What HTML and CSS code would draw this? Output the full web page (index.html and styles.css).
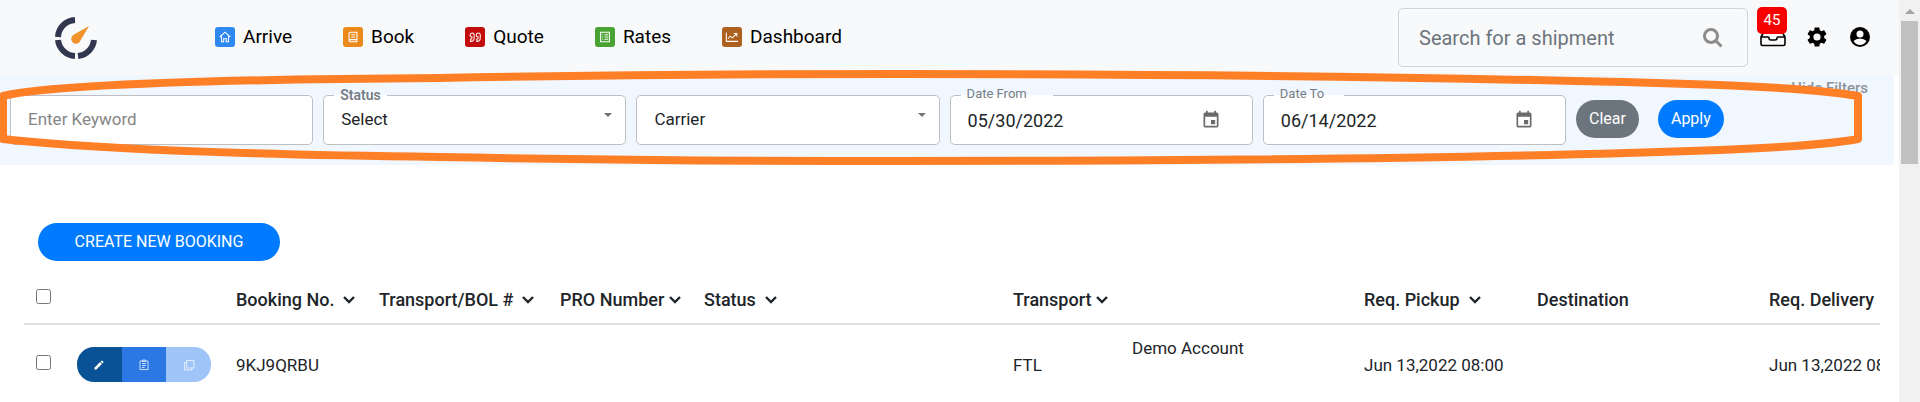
FILE: index.html
```html
<!DOCTYPE html>
<html lang="en">
<head>
  <meta charset="UTF-8">
  <title>Bookings</title>
  <link rel="stylesheet" href="styles.css">
</head>
<body>

  <div class="page">
    <header class="topbar">
      <a href="#" class="logo" aria-label="Home">
        <svg width="44" height="44" viewBox="0 0 44 44" fill="none">
          <g stroke="#31374f" stroke-width="6">
            <path d="M21 4A18 18 0 0 0 4 21"/>
            <path d="M4 24A18 18 0 0 0 21 40"/>
            <path d="M24 40A18 18 0 0 0 40 24"/>
          </g>
          <path d="M35 10L26.500 24.500A4.800 4.800 0 1 1 20 18.500Z" fill="#f0932b"/>
        </svg>
      </a>

      <nav class="menu">
        <a href="#">
          <span class="menu-icon blue">
            <svg viewBox="0 0 16 16"><path d="M2 8L8 2.500L14 8M4 7V13.500H6.500V10H9.500V13.500H12V7"/></svg>
          </span>
          Arrive
        </a>
        <a href="#">
          <span class="menu-icon orange">
            <svg viewBox="0 0 16 16"><path d="M13 2.500H5Q3.500 2.500 3.500 4V12Q3.500 13.500 5 13.500H13M12.500 2.500V11H5Q3.500 11 3.500 12.500M6 5.500H10.500M6 8H10.500M12.500 11V13.500"/></svg>
          </span>
          Book
        </a>
        <a href="#">
          <span class="menu-icon red">
            <svg viewBox="0 0 16 16"><path d="M7 5.500A2.300 2.300 0 1 0 4.500 8V9.500Q4.500 10.500 3 10.500V13Q7 13 7 9ZM14 5.500A2.300 2.300 0 1 0 11.500 8V9.500Q11.500 10.500 10 10.500V13Q14 13 14 9Z"/></svg>
          </span>
          Quote
        </a>
        <a href="#">
          <span class="menu-icon green">
            <svg viewBox="0 0 16 16"><path d="M3 2.500H13V13.500H3ZM5 5.500H6M7.500 5.500H11.500M5 8H6M7.500 8H11.500M5 10.500H6M7.500 10.500H11.500"/></svg>
          </span>
          Rates
        </a>
        <a href="#">
          <span class="menu-icon brown">
            <svg viewBox="0 0 16 16"><path d="M1.500 3V13H15M3.500 10L6 7L8.500 9L13 4.500M10 4H13.500V7.500"/></svg>
          </span>
          Dashboard
        </a>
      </nav>

      <form class="search">
        <input type="text" placeholder="Search for a shipment" aria-label="Search for a shipment">
        <button type="button" aria-label="Search">
          <svg width="20" height="20" viewBox="0 0 20 20" fill="none" stroke="#8c8c8c" stroke-width="3">
            <circle cx="8" cy="8" r="6.500"/>
            <path d="M12.500 12.500L18.500 18.500"/>
          </svg>
        </button>
      </form>

      <div class="tools">
        <button type="button" class="inbox" aria-label="Messages">
          <svg width="26" height="20" viewBox="0 0 26 20" fill="none" stroke="#000" stroke-width="1.600" stroke-linejoin="round">
            <path d="M1 10L5 3H21L25 10V17Q25 18.500 23.500 18.500H2.500Q1 18.500 1 17ZM1 10H8Q9 10 9 11Q9 13 11 13H15Q17 13 17 11Q17 10 18 10H25"/>
          </svg>
          <span class="badge">45</span>
        </button>
        <button type="button" aria-label="Settings">
          <svg width="24" height="24" viewBox="0 0 24 24">
            <path d="M19.140 12.940c.04-.3.060-.61.060-.94s-.02-.64-.07-.94l2.030-1.580c.18-.14.23-.41.120-.61l-1.920-3.320c-.12-.22-.37-.29-.59-.22l-2.390.96c-.5-.38-1.030-.7-1.620-.94l-.36-2.540c-.04-.24-.24-.41-.48-.41h-3.840c-.24 0-.43.17-.47.41l-.36 2.540c-.59.24-1.130.57-1.620.94l-2.390-.96c-.22-.08-.47 0-.59.22L2.740 8.870c-.12.21-.08.470.12.610l2.030 1.580c-.05.3-.09.630-.09.940s.02.640.070.940l-2.030 1.580c-.18.140-.23.410-.12.610l1.920 3.320c.12.220.37.290.59.220l2.390-.96c.5.380 1.030.7 1.620.94l.36 2.540c.05.240.24.410.48.410h3.840c.24 0 .44-.17.470-.41l.36-2.540c.59-.24 1.130-.56 1.620-.94l2.390.96c.22.080.47 0 .59-.22l1.920-3.320c.12-.22.070-.47-.12-.61zM12 15.600A3.600 3.600 0 1 1 12 8.400A3.600 3.600 0 0 1 12 15.600z"/>
          </svg>
        </button>
        <button type="button" aria-label="Account">
          <svg width="24" height="24" viewBox="0 0 24 24">
            <circle cx="12" cy="12" r="10"/>
            <circle cx="12" cy="9" r="3.500" fill="#f8f9fa"/>
            <path d="M5.500 16Q8 13.500 12 13.500T18.500 16Q16 20 12 20T5.500 16Z" fill="#f8f9fa"/>
          </svg>
        </button>
      </div>
    </header>

    <section class="filters">
      <a href="#" class="hide-filters">Hide Filters</a>

      <div class="field">
        <input type="text" placeholder="Enter Keyword" aria-label="Keyword">
      </div>
      <div class="field">
        <label for="status" class="bold">Status</label>
        <select id="status">
          <option>Select</option>
        </select>
        <span class="caret"></span>
      </div>
      <div class="field">
        <select id="carrier" aria-label="Carrier">
          <option>Carrier</option>
        </select>
        <span class="caret"></span>
      </div>
      <div class="field date">
        <label for="dateFrom" class="date-from">Date From</label>
        <input type="text" id="dateFrom" value="05/30/2022">
        <button type="button" aria-label="Pick start date">
          <svg width="20" height="20" viewBox="0 0 24 24"><path d="M17 12h-5v5h5v-5zM16 1v2H8V1H6v2H5c-1.110 0-2 .9-2 2v14c0 1.100.89 2 2 2h14c1.100 0 2-.9 2-2V5c0-1.100-.9-2-2-2h-1V1h-2zm3 18H5V8h14v11z"/></svg>
        </button>
      </div>
      <div class="field date">
        <label for="dateTo" class="date-to">Date To</label>
        <input type="text" id="dateTo" value="06/14/2022">
        <button type="button" aria-label="Pick end date">
          <svg width="20" height="20" viewBox="0 0 24 24"><path d="M17 12h-5v5h5v-5zM16 1v2H8V1H6v2H5c-1.110 0-2 .9-2 2v14c0 1.100.89 2 2 2h14c1.100 0 2-.9 2-2V5c0-1.100-.9-2-2-2h-1V1h-2zm3 18H5V8h14v11z"/></svg>
        </button>
      </div>
      <div class="filter-buttons">
        <button type="button" class="btn grey">Clear</button>
        <button type="button" class="btn">Apply</button>
      </div>

      <!-- hand drawn highlight around the filters -->
      <svg class="highlight" viewBox="0 0 1894 90" preserveAspectRatio="none">
        <path d="M3 21C60 8 280 4 440 3C600 0 760 -1 900 -1C1240 -1 1500 3 1720 10Q1820 14 1858 21V64Q1820 71 1720 75C1500 83 1240 86 900 86C760 86 600 85 440 82C280 80 100 75 3 64Z"/>
      </svg>
    </section>

    <main class="content">
      <button type="button" class="btn create">CREATE NEW BOOKING</button>

      <div class="table-wrap">
        <table>
          <colgroup>
            <col class="c-check">
            <col class="c-actions">
            <col class="c-booking">
            <col class="c-bol">
            <col class="c-pro">
            <col class="c-status">
            <col class="c-transport">
            <col class="c-date">
            <col class="c-pickup">
            <col class="c-date">
            <col>
          </colgroup>
          <thead>
            <tr>
              <th><input type="checkbox" aria-label="Select all"></th>
              <th></th>
              <th>Booking No. &nbsp;<svg class="sort" viewBox="0 0 12 8"><path d="M1 1L6 6L11 1"/></svg></th>
              <th>Transport/BOL # &nbsp;<svg class="sort" viewBox="0 0 12 8"><path d="M1 1L6 6L11 1"/></svg></th>
              <th>PRO Number <svg class="sort" viewBox="0 0 12 8"><path d="M1 1L6 6L11 1"/></svg></th>
              <th>Status &nbsp;<svg class="sort" viewBox="0 0 12 8"><path d="M1 1L6 6L11 1"/></svg></th>
              <th>Transport <svg class="sort" viewBox="0 0 12 8"><path d="M1 1L6 6L11 1"/></svg></th>
              <th></th>
              <th>Req. Pickup &nbsp;<svg class="sort" viewBox="0 0 12 8"><path d="M1 1L6 6L11 1"/></svg></th>
              <th>Destination</th>
              <th>Req. Delivery</th>
            </tr>
          </thead>
          <tbody>
            <tr>
              <td><input type="checkbox" aria-label="Select booking"></td>
              <td>
                <div class="actions">
                  <button type="button" class="edit" aria-label="Edit">
                    <svg viewBox="0 0 24 24" fill="#fff"><path d="M3 17.250V21h3.750L17.810 9.940l-3.750-3.750L3 17.250zM20.710 7.040a1 1 0 0 0 0-1.410l-2.340-2.340a1 1 0 0 0-1.410 0l-1.830 1.830 3.750 3.750 1.830-1.830z"/></svg>
                  </button>
                  <button type="button" class="details" aria-label="Details">
                    <svg viewBox="0 0 24 24" fill="none" stroke="#c9dcfa" stroke-width="2"><path d="M4 4H20V21H4ZM9 2H15V5H9ZM8 9H16M8 13H16M8 17H13"/></svg>
                  </button>
                  <button type="button" class="copy" aria-label="Copy">
                    <svg viewBox="0 0 24 24" fill="none" stroke="#e3edfc" stroke-width="2"><path d="M7 3H22V18H7ZM7 7H3V22H18V18"/></svg>
                  </button>
                </div>
              </td>
              <td>9KJ9QRBU</td>
              <td></td>
              <td></td>
              <td></td>
              <td>FTL</td>
              <td class="account">Demo Account</td>
              <td>Jun 13,2022 08:00</td>
              <td></td>
              <td>Jun 13,2022 08:00</td>
            </tr>
          </tbody>
        </table>
      </div>
    </main>
  </div>

  <div class="scrollbar">
    <span class="scroll-up"></span>
    <div class="scroll-thumb"></div>
  </div>

</body>
</html>
```
FILE: styles.css
```css
* {
  box-sizing: border-box;
  margin: 0;
  padding: 0;
}

body {
  font-family: Roboto, Arial, sans-serif;
  font-size: 17px;
  color: #212529;
  background-color: #fff;
  display: flex;
  height: 100vh;
  overflow: hidden;
}

button {
  font-family: inherit;
  border: none;
  background: none;
  cursor: pointer;
}

input, select {
  font-family: inherit;
  color: inherit;
}

a {
  text-decoration: none;
}

svg {
  display: block;
}

.page {
  flex: 1;
  min-width: 0;
}

/* top bar */

.topbar {
  display: flex;
  align-items: center;
  height: 75px;
  padding-right: 27px;
  background-color: #f8f9fa;
}

.logo {
  margin-left: 54px;
  margin-right: 117px;
}

.menu {
  display: flex;
  gap: 51px;
  flex: 1;
}

.menu a {
  display: flex;
  align-items: center;
  gap: 8px;
  padding-bottom: 2px;
  font-size: 19px;
  line-height: 24px;
  color: #000;
}

.menu-icon {
  width: 20px;
  height: 20px;
  padding: 3px;
  border-radius: 3px;
}

.menu-icon svg {
  width: 14px;
  height: 14px;
  fill: none;
  stroke: #fff;
  stroke-width: 1.2;
}

.blue { background-color: #2d88ef; }
.orange { background-color: #ea8a1a; }
.red { background-color: #c30d0d; }
.green { background-color: #4aa232; }
.brown { background-color: #ad611f; }

.search {
  display: flex;
  align-items: center;
  width: 350px;
  height: 59px;
  padding: 0 24px 0 20px;
  border: 1px solid #ced4da;
  border-radius: 5px;
}

.search input {
  flex: 1;
  min-width: 0;
  border: none;
  outline: none;
  background: none;
  font-size: 20px;
}

.search input::placeholder {
  color: #6c757d;
}

.tools {
  display: flex;
  align-items: center;
  gap: 19px;
  margin-left: 12px;
  padding-bottom: 2px;
}

.inbox {
  position: relative;
}

.badge {
  position: absolute;
  left: -3px;
  bottom: 13px;
  width: 30px;
  height: 27px;
  border-radius: 5px;
  background-color: #f60000;
  color: #fff;
  font-size: 15px;
  line-height: 27px;
}

/* filters */

.filters {
  position: relative;
  display: flex;
  align-items: center;
  gap: 10px;
  height: 90px;
  margin-right: 5px;
  padding-left: 10px;
  background-color: #f0f7ff;
}

.field {
  position: relative;
  flex: 1;
}

.field input, .field select {
  display: block;
  width: 100%;
  height: 50px;
  padding: 0 17px 3px;
  border: 1px solid #bdbfc2;
  border-radius: 5px;
  background-color: #fff;
  font-size: 17px;
  appearance: none;
  outline: none;
}

.field input::placeholder {
  color: #858585;
}

.field.date input {
  padding-bottom: 0;
  font-size: 18px;
}

.field label {
  position: absolute;
  top: -11px;
  left: 11px;
  padding: 0 6px;
  font-size: 13px;
  line-height: 20px;
  color: #757d85;
  background: linear-gradient(#fff, #fff) 0 11px / 100% 2px no-repeat;
}

.field .bold {
  top: -10px;
  font-size: 14px;
  font-weight: 600;
  background-position: 0 10px;
}

.field .date-from {
  width: 92px;
}

.field .date-to {
  width: 70px;
}

.field button {
  position: absolute;
  right: 32px;
  top: 15px;
}

.field button svg {
  fill: #6b6b6b;
}

.caret {
  position: absolute;
  right: 14px;
  top: 18px;
  border: 4px solid transparent;
  border-top-color: #757575;
  border-bottom: none;
}

.filter-buttons {
  display: flex;
  gap: 19px;
  width: 318px;
  padding-bottom: 2px;
}

.btn {
  height: 38px;
  padding: 0 13px 2px;
  border-radius: 19px;
  background-color: #007bff;
  color: #fff;
  font-size: 16px;
}

.btn.grey {
  background-color: #6c757d;
}

.hide-filters {
  position: absolute;
  top: 3px;
  right: 26px;
  font-size: 15px;
  font-weight: 500;
  line-height: 20px;
  color: #8b949d;
}

.highlight {
  position: absolute;
  top: 0;
  left: 0;
  width: 100%;
  height: 100%;
  overflow: visible;
  pointer-events: none;
}

.highlight path {
  fill: none;
  stroke: #ff7f27;
  stroke-width: 8;
  stroke-linejoin: round;
}

/* bookings table */

.content {
  padding: 58px 19px 0 24px;
}

.btn.create {
  display: block;
  width: 242px;
  margin-left: 14px;
}

.table-wrap {
  margin-top: 10px;
  overflow: hidden;
}

table {
  width: 1920px;
  table-layout: fixed;
  border-collapse: collapse;
}

.c-check { width: 41px; }
.c-actions { width: 159px; }
.c-booking { width: 143px; }
.c-bol { width: 181px; }
.c-pro { width: 144px; }
.c-status { width: 309px; }
.c-transport { width: 119px; }
.c-date { width: 232px; }
.c-pickup { width: 173px; }

th, td {
  padding-left: 12px;
  text-align: left;
  white-space: nowrap;
}

th {
  height: 53px;
  padding-top: 4px;
  border-bottom: 2px solid #dee2e6;
  font-size: 18px;
  font-weight: 500;
}

td {
  height: 81px;
  padding-bottom: 1px;
}

td.account {
  padding-top: 11px;
  vertical-align: top;
  line-height: 24px;
}

th input, td input {
  display: block;
  width: 15px;
  height: 15px;
  margin-bottom: 5px;
}

.sort {
  display: inline-block;
  width: 12px;
  height: 8px;
  vertical-align: 2px;
  fill: none;
  stroke: #212529;
  stroke-width: 2.4;
}

.actions {
  display: flex;
  width: 134px;
  height: 35px;
  border-radius: 17px;
  overflow: hidden;
}

.actions button {
  flex: 1;
}

.actions svg {
  width: 12px;
  height: 12px;
  margin: 0 auto;
}

.edit { background-color: #0a5296; }
.details { background-color: #2b78e4; }
.copy { background-color: #9fc5f8; }

/* scrollbar */

.scrollbar {
  width: 21px;
  padding: 9px 2px 0;
  background-color: #f1f1f1;
}

.scroll-up {
  display: block;
  width: 10px;
  margin: 0 auto 7px;
  border: 5px solid transparent;
  border-top: none;
  border-bottom-color: #a3a3a3;
}

.scroll-thumb {
  height: 143px;
  background-color: #c1c1c1;
}
```
